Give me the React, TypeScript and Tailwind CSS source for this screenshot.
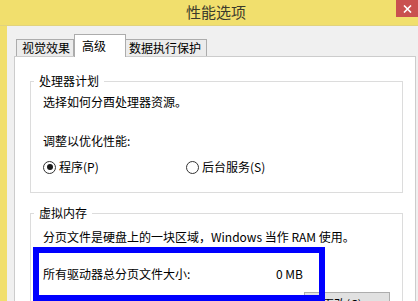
export default function App() {
  return (
    <div className="relative w-[418px] h-[301px] overflow-hidden bg-[#f1df6d] flex flex-col font-['Noto_Sans_CJK_SC',sans-serif] text-[12px] text-black">
      <div className="h-[26px] shrink-0 flex items-start border-b border-[#e2d37c]">
        <div className="pl-[186px] pt-[3px] text-[15px] leading-[18px] text-[#3b3a2c]">性能选项</div>
        <div className="ml-auto w-[22px] h-[17px] bg-[#c9504f] flex items-center justify-center">
          <svg width="9" height="8" viewBox="0 0 9 8">
            <path d="M1 0.5 L8 7.5 M8 0.5 L1 7.5" stroke="white" strokeWidth="1.6" />
          </svg>
        </div>
      </div>
      <div className="flex-1 flex min-h-0">
        <div className="w-[7px] shrink-0" />
        <div className="flex-1 bg-[#f0f0f0] pl-[7px] pt-[8px] flex flex-col">
          <div className="h-[22px] flex items-end pl-[2px] shrink-0">
            <div className="w-[58px] h-[17px] border border-b-0 border-[#acacac] bg-[#ececec] flex items-center pl-[5px] leading-[16px]">
              视觉效果
            </div>
            <div className="relative z-10 w-[52px] h-[23px] -mb-px border border-b-0 border-[#acacac] bg-white flex items-center pl-[7px] leading-[16px]">
              高级
            </div>
            <div className="w-[81px] h-[17px] border border-l-0 border-b-0 border-[#acacac] bg-[#ececec] flex items-center pl-[3px] leading-[16px]">
              数据执行保护
            </div>
          </div>
          <div className="w-[402px] flex-1 bg-white border border-[#cccccc] pl-[15px] pt-[16px]">
            <fieldset className="w-[373px] border border-[#dcdcdc] pb-[17px]">
              <legend className="ml-[3px] px-[5px] leading-[16px]">处理器计划</legend>
              <div className="pl-[12px]">
                <div className="mt-[5px] leading-[16px]">选择如何分酉处理器资源。</div>
                <div className="mt-[23px] leading-[16px]">调整以优化性能:</div>
                <div className="mt-[10px] flex items-center leading-[16px]">
                  <div className="w-[143px] flex items-center">
                    <span className="w-[13px] h-[13px] rounded-full border border-[#333333] bg-white flex items-center justify-center">
                      <span className="w-[6px] h-[6px] rounded-full bg-[#1a1a1a]" />
                    </span>
                    <span className="ml-[3px]">程序(P)</span>
                  </div>
                  <div className="flex items-center">
                    <span className="w-[13px] h-[13px] rounded-full border border-[#333333] bg-white" />
                    <span className="ml-[3px]">后台服务(S)</span>
                  </div>
                </div>
              </div>
            </fieldset>
            <fieldset className="mt-[12px] w-[373px] border border-[#dcdcdc] pb-[17px]">
              <legend className="ml-[3px] px-[5px] leading-[16px]">虚拟内存</legend>
              <div className="pl-[12px]">
                <div className="mt-[8px] leading-[16px]">分页文件是硬盘上的一块区域，Windows 当作 RAM 使用。</div>
                <div className="mt-[21px] flex leading-[16px]">
                  <span className="w-[233px]">所有驱动器总分页文件大小:</span>
                  <span>0 MB</span>
                </div>
                <div className="mt-[10px] flex justify-end pr-[12px]">
                  <div className="w-[86px] h-[23px] bg-[#e1e1e1] border border-[#adadad] flex items-center justify-center leading-[16px]">
                    更改(C)...
                  </div>
                </div>
              </div>
            </fieldset>
          </div>
        </div>
      </div>
      <div className="absolute left-[33px] top-[247px] w-[292px] h-[54px] border-[6px] border-[#0000ff]" />
    </div>
  );
}
